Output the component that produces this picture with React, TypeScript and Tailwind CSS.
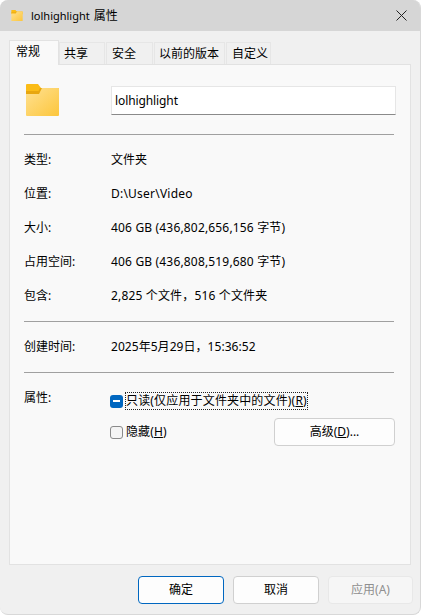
import { ReactNode } from 'react';

const font = { fontFamily: '"Noto Sans", "Noto Sans CJK SC", sans-serif' };

const tabs = [
  { label: '共享', cls: 'w-[46px] pl-[4px]' },
  { label: '安全', cls: 'w-[47px] pl-[5px]' },
  { label: '以前的版本', cls: 'w-[71px] pl-[4px]' },
  { label: '自定义', cls: 'w-[45px] pl-[5px]' },
];

function FolderIcon({ w, h, id, className }: { w: number; h: number; id: string; className?: string }) {
  return (
    <svg width={w} height={h} viewBox="0 0 33 32" className={className}>
      <defs>
        <linearGradient id={id} x1="0" y1="0" x2="1" y2="1">
          <stop offset="0" stopColor="#ffe192" />
          <stop offset="1" stopColor="#fcc63c" />
        </linearGradient>
      </defs>
      <path d="M0 1A1 1 0 0 1 1 0h11l3 4H32A1 1 0 0 1 33 5V12H0z" fill="#fbbc17" />
      <path d="M0 7h12.500l1.500-3h3v6H0z" fill="#e8a70f" />
      <path d="M0 10h13l3-6h16A1 1 0 0 1 33 5V31A1 1 0 0 1 32 32H1A1 1 0 0 1 0 31z" fill={`url(#${id})`} />
    </svg>
  );
}

function Row({ label, children, h = 'h-[34px]', cls = '' }: { label: string; children: ReactNode; h?: string; cls?: string }) {
  return (
    <div className={`flex items-center ${h}`}>
      <div className="w-[87px] shrink-0">{label}</div>
      <div className={cls}>{children}</div>
    </div>
  );
}

function Sep() {
  return <div className="h-px bg-[#a0a0a0] w-[370px]" />;
}

export default function App() {
  return (
    <div className="w-[421px] h-[615px] bg-white text-[12px] leading-[16px] text-black" style={font}>
      <div className="w-full h-full flex flex-col bg-[#f0f0f0] rounded-[8px] overflow-hidden border-b border-r border-[#d8d8d8]">
        <div className="h-[31px] shrink-0 bg-[#d6d6d6] flex items-center pl-[10px] pr-[13px]">
          <FolderIcon w={14} h={11} id="folderSmall" className="mt-[-1px]" />
          <span className="ml-[7px] text-[11px]">lolhighlight</span>
          <span className="ml-[4px]">属性</span>
          <svg width="11" height="11" viewBox="0 0 11 11" className="ml-auto" stroke="#222" strokeWidth="1">
            <path d="M.5.5l10 10M10.5.5l-10 10" />
          </svg>
        </div>

        <div className="flex pl-[9px] pt-[9px] h-[33px] shrink-0 items-end relative z-10">
          <div className="w-[50px] h-[25px] bg-[#f9f9f9] border border-b-0 border-[#e2e2e2] pl-[6px] pt-[3px] mb-[-1px]">常规</div>
          {tabs.map((t) => (
            <div
              key={t.label}
              className={`${t.cls} h-[22px] mr-px bg-[#f0f0f0] border border-b-0 border-[#e6e6e6] pt-[3px] whitespace-nowrap`}
            >
              {t.label}
            </div>
          ))}
        </div>

        <div className="ml-[9px] w-[402px] h-[501px] shrink-0 bg-[#f9f9f9] border border-[#e2e2e2] pl-[14px]">
          <div className="flex items-center h-[69px] pl-[2px]">
            <FolderIcon w={33} h={32} id="folderLarge" className="mt-[1px]" />
            <div className="ml-[52px] w-[285px] h-[29px] mt-[1px] bg-white border border-[#e6e6e6] border-b-[#8a8a8a] pl-[3px] pt-[1px] flex items-center tracking-[-0.1px]">
              lolhighlight
            </div>
          </div>
          <Sep />
          <div className="pt-[8px] pb-[8px]">
            <Row label="类型:">文件夹</Row>
            <Row label="位置:" cls="tracking-[0.22px]">D:\User\Video</Row>
            <Row label="大小:" cls="tracking-[0.17px]">406 GB (436,802,656,156 字节)</Row>
            <Row label="占用空间:" cls="tracking-[0.17px]">406 GB (436,808,519,680 字节)</Row>
            <Row label="包含:" cls="tracking-[0.16px]">2,825 个文件，516 个文件夹</Row>
          </div>
          <Sep />
          <Row label="创建时间:" h="h-[50px]" cls="tracking-[0.05px]">2025年5月29日，15:36:52</Row>
          <Sep />
          <div className="flex pt-[15px]">
            <div className="w-[86px] shrink-0 h-[20px] flex items-center">属性:</div>
            <div className="flex-1">
              <div className="flex items-center h-[24px] mt-[1px]">
                <div className="w-[13px] h-[13px] rounded-[3px] bg-[#0067c0] flex items-center justify-center">
                  <div className="w-[7px] h-[1.5px] bg-white" />
                </div>
                <div className="ml-[3px] h-[16px] flex items-center outline-dotted outline-1 outline-offset-0 outline-[#222] whitespace-nowrap tracking-[0.16px]">
                  只读(仅应用于文件夹中的文件)(<u>R</u>)
                </div>
              </div>
              <div className="flex items-center h-[30px] mt-[4px]">
                <div className="w-[13px] h-[13px] rounded-[3px] bg-[#f4f4f4] border border-[#8a8a8a]" />
                <div className="ml-[3px] tracking-[0.1px]">隐藏(<u>H</u>)</div>
                <button className="ml-auto mr-[15px] w-[121px] h-[28px] bg-[#fdfdfd] border border-[#d0d0d0] rounded-[4px]">
                  高级(<u>D</u>)...
                </button>
              </div>
            </div>
          </div>
        </div>

        <div className="flex pl-[138px] pt-[11px] gap-[9px]">
          <button className="w-[86px] h-[28px] bg-[#fdfdfd] border border-[#0067c0] rounded-[4px]">确定</button>
          <button className="w-[86px] h-[28px] bg-[#fdfdfd] border border-[#d0d0d0] rounded-[4px]">取消</button>
          <button className="w-[85px] h-[28px] bg-[#f6f6f6] border border-[#e8e8e8] rounded-[4px] text-[#8f8f8f]">应用(A)</button>
        </div>
      </div>
    </div>
  );
}
